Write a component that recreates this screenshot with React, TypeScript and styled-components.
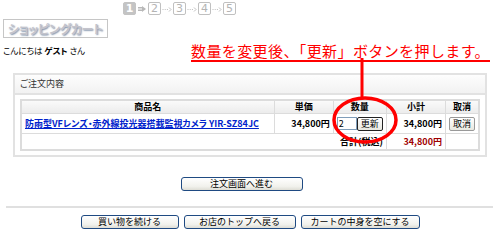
import React from 'react'
import styled, { createGlobalStyle } from 'styled-components'

const GlobalStyle = createGlobalStyle`
  html, body {
    margin: 0;
    padding: 0;
    background: #fff;
  }
  body {
    font-family: "Noto Sans CJK JP", "Noto Sans", sans-serif;
    font-feature-settings: "palt";
    color: #000;
  }
`

const Page = styled.div`
  position: relative;
  width: 500px;
  height: 240px;
  overflow: hidden;
  padding: 2px 0 0 0;
  box-sizing: border-box;
`

const Steps = styled.div`
  display: flex;
  align-items: center;
  height: 13px;
  padding-left: 123px;
`

const StepBox = styled.div<{ $active?: boolean }>`
  width: 13px;
  height: 13px;
  box-sizing: border-box;
  border: 1px solid ${p => (p.$active ? '#c4c4c4' : '#c0c0c0')};
  background: ${p => (p.$active ? '#c4c4c4' : '#fff')};
  color: ${p => (p.$active ? '#fff' : '#b4b4b4')};
  border-radius: 2px;
  font-family: "DejaVu Sans", sans-serif;
  font-size: 11px;
  font-weight: ${p => (p.$active ? 'bold' : 'normal')};
  line-height: 11px;
  text-align: center;
`

const StepArrow = styled.svg`
  width: 12px;
  height: 8px;
`

const TitleBox = styled.div`
  display: inline-block;
  margin: 1px 0 0 3px;
  padding: 1px 4px 1px 4px;
  border: 1px solid #c6c6c6;
  font-size: 12px;
  font-weight: bold;
  letter-spacing: -0.3px;
  color: #c4c4cc;
  text-shadow: 1px 1px 1.5px #7d8fa8;
  line-height: 15px;
`

const GreetRow = styled.div`
  display: flex;
  justify-content: space-between;
  align-items: flex-end;
  padding: 0 10px 0 3px;
  margin-top: 3px;
`

const Greeting = styled.div`
  font-size: 8.5px;
  padding-bottom: 6px;

  b {
    font-weight: bold;
  }
`

const Notice = styled.div`
  color: #ff0000;
  font-size: 15px;
  line-height: 18px;
  letter-spacing: 0.4px;
  border-bottom: 2px solid #ff0000;
  font-feature-settings: normal;
`

const Panel = styled.div`
  margin: 11px 13px 0 13px;
  border: 2px solid #e2e2e2;
`

const PanelHead = styled.div`
  height: 18px;
  line-height: 18px;
  padding-left: 5px;
  font-size: 9px;
  color: #333;
  background: linear-gradient(#fdfdfd, #f2f2f2);
  border-bottom: 2px solid #e2e2e2;
`

const PanelBody = styled.div`
  padding: 4px 5px 4px 5px;
`

const Table = styled.table`
  width: 100%;
  border-collapse: collapse;
  border: 2px solid #dcdcdc;
  font-size: 9px;
`

const Th = styled.th<{ $w: number }>`
  width: ${p => p.$w}px;
  height: 12px;
  padding: 0;
  border: 1px solid #dcdcdc;
  background: linear-gradient(#fafafa, #ececec);
  font-weight: bold;
  text-align: center;
  line-height: 12px;
`

const Td = styled.td<{ $align?: string; $h?: number }>`
  height: ${p => p.$h ?? 18}px;
  padding: 0 3px;
  border: 1px solid #dcdcdc;
  text-align: ${p => p.$align ?? 'left'};
  font-weight: bold;
  white-space: nowrap;
  line-height: 12px;
`

const ProductLink = styled.a`
  color: #0022cc;
  text-decoration: underline;
  font-weight: bold;
`

const QtyInput = styled.input`
  width: 20px;
  height: 13px;
  box-sizing: border-box;
  border: 1px solid #7f9db9;
  padding: 0 1px;
  font-size: 9px;
  font-family: inherit;
  vertical-align: middle;
`

const SmallButton = styled.button<{ $dark?: boolean }>`
  height: 14px;
  box-sizing: border-box;
  padding: 0 3px;
  margin: 0;
  border: 1px solid ${p => (p.$dark ? '#222' : '#999')};
  border-radius: 2px;
  background: linear-gradient(#fff, #e8e8e0);
  font-size: 9px;
  font-family: inherit;
  line-height: 12px;
  color: #000;
  vertical-align: middle;
`

const TotalPrice = styled.span`
  color: #a00000;
`

const Center = styled.div`
  display: flex;
  justify-content: center;
  gap: 5px;
`

const Button = styled.button<{ $w: number }>`
  width: ${p => p.$w}px;
  height: 14px;
  box-sizing: border-box;
  padding: 0;
  border: 1px solid #1f4a82;
  border-radius: 3px;
  background: linear-gradient(#ffffff, #f1f1ec 70%, #deddd5);
  font-size: 9px;
  font-family: inherit;
  line-height: 12px;
  color: #000;
`

const NextRow = styled(Center)`
  margin-top: 20px;
  padding-right: 17px;
`

const Rule = styled.hr`
  margin: 15px 7px 7px 6px;
  border: 0;
  border-top: 2px solid #e0e0e0;
`

const Overlay = styled.svg`
  position: absolute;
  left: 0;
  top: 0;
  width: 500px;
  height: 240px;
  pointer-events: none;
`

const App: React.FC = () => {
  return (
    <Page>
      <GlobalStyle />
      <Steps>
        <StepBox $active>1</StepBox>
        <StepArrow viewBox="0 0 12 8">
          <path d="M2 2.5h4M2 4h4M2 5.5h4" stroke="#b8b8b8" strokeWidth="1" />
          <path d="M6 1l4 3-4 3z" fill="#b8b8b8" />
        </StepArrow>
        <StepBox>2</StepBox>
        {[3, 4, 5].map(n => (
          <React.Fragment key={n}>
            <StepArrow viewBox="0 0 12 8">
              <circle cx="2" cy="4.5" r="0.6" fill="#b8b8b8" />
              <circle cx="4.2" cy="4.5" r="0.6" fill="#b8b8b8" />
              <circle cx="6.4" cy="4.5" r="0.6" fill="#b8b8b8" />
              <path d="M8 2.5l2 2-2 2" stroke="#b8b8b8" fill="none" strokeWidth="0.9" />
            </StepArrow>
            <StepBox>{n}</StepBox>
          </React.Fragment>
        ))}
      </Steps>
      <TitleBox>ショッピングカート</TitleBox>
      <GreetRow>
        <Greeting>
          こんにちは <b>ゲスト</b> さん
        </Greeting>
        <Notice>数量を変更後、「更新」ボタンを押します。</Notice>
      </GreetRow>
      <Panel>
        <PanelHead>ご注文内容</PanelHead>
        <PanelBody>
          <Table>
            <thead>
              <tr>
                <Th $w={255}>商品名</Th>
                <Th $w={62}>単価</Th>
                <Th $w={51}>数量</Th>
                <Th $w={62}>小計</Th>
                <Th $w={30}>取消</Th>
              </tr>
            </thead>
            <tbody>
              <tr>
                <Td $h={19}>
                  <ProductLink href="#">
                    防雨型VFレンズ・赤外線投光器搭載監視カメラ YIR-SZ84JC
                  </ProductLink>
                </Td>
                <Td $align="right">34,800円</Td>
                <Td $align="center">
                  <QtyInput defaultValue="2" />
                  <SmallButton $dark>更新</SmallButton>
                </Td>
                <Td $align="right">34,800円</Td>
                <Td $align="center">
                  <SmallButton>取消</SmallButton>
                </Td>
              </tr>
              <tr>
                <Td colSpan={3} $align="right" $h={15}>
                  合計(税込)
                </Td>
                <Td $align="right" $h={15}>
                  <TotalPrice>34,800円</TotalPrice>
                </Td>
                <Td $h={15} />
              </tr>
            </tbody>
          </Table>
        </PanelBody>
      </Panel>
      <NextRow>
        <Button $w={122}>注文画面へ進む</Button>
      </NextRow>
      <Rule />
      <Center>
        <Button $w={98}>買い物を続ける</Button>
        <Button $w={112}>お店のトップへ戻る</Button>
        <Button $w={119}>カートの中身を空にする</Button>
      </Center>
      <Overlay viewBox="0 0 500 240">
        <line x1="362" y1="58" x2="362" y2="98" stroke="#ff0000" strokeWidth="3" />
        <ellipse cx="365" cy="120" rx="31" ry="22" stroke="#ff0000" strokeWidth="3.5" fill="none" />
      </Overlay>
    </Page>
  )
}

export default App
